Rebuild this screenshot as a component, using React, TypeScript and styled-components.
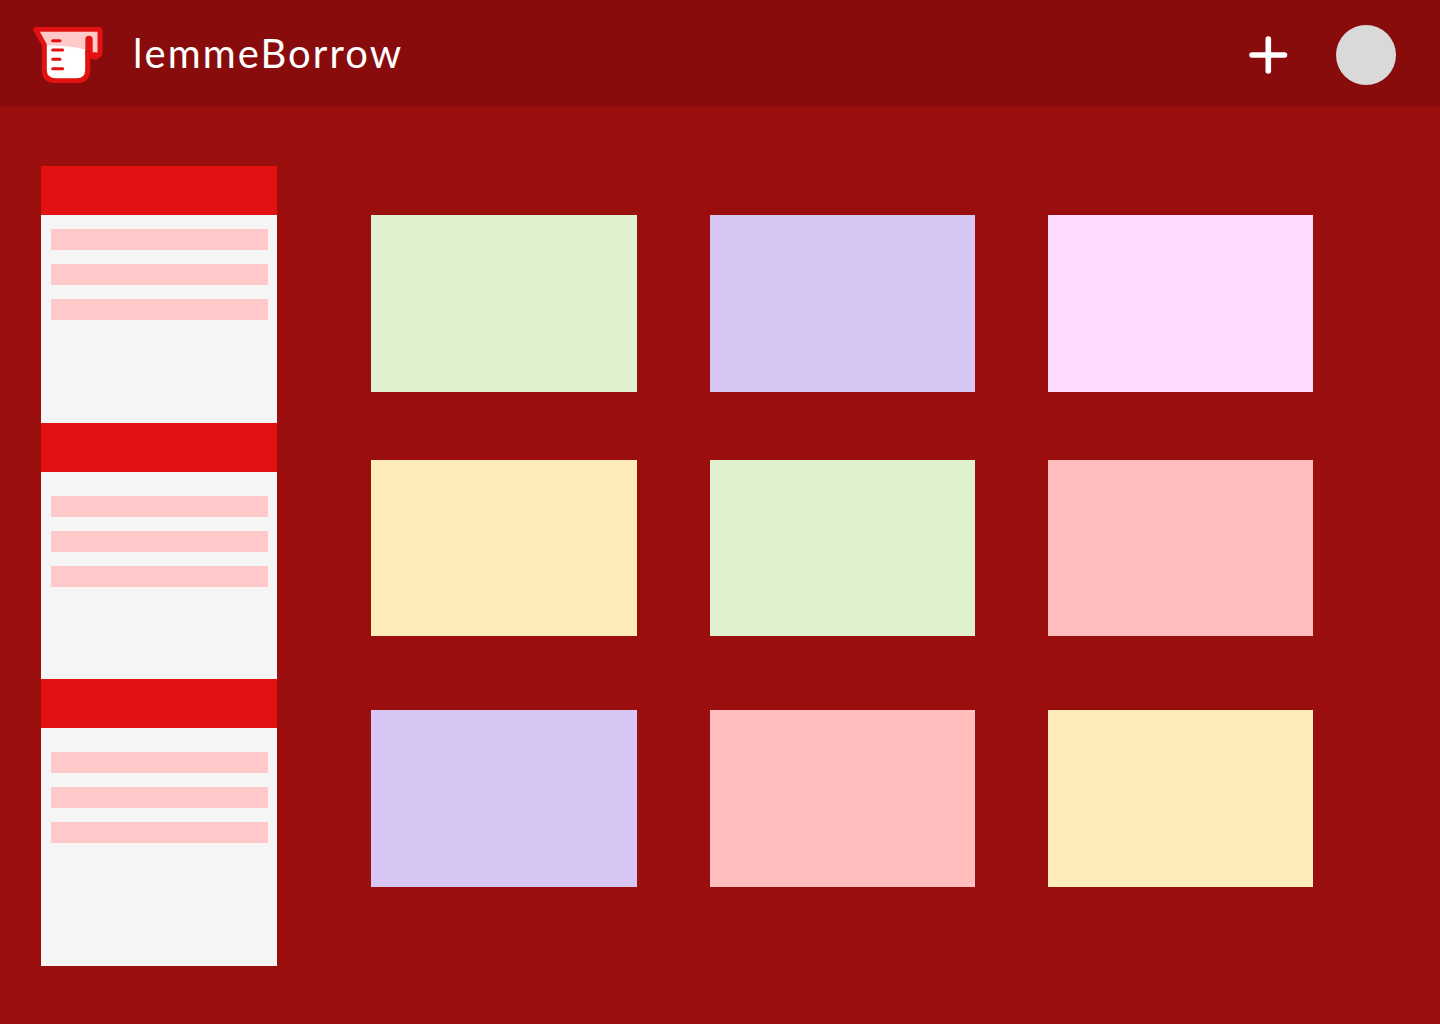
import styled, { createGlobalStyle } from "styled-components";

const GlobalStyle = createGlobalStyle`
    html, body {
        margin: 0;
        padding: 0;
        background: #9b0e0e;
    }
    * {
        box-sizing: border-box;
    }
`;

const Page = styled.div`
    width: 1440px;
    height: 1024px;
    overflow: hidden;
    background: #9b0e0e;
`;

const Header = styled.header`
    display: flex;
    align-items: center;
    height: 107px;
    padding: 3px 44px 0 33px;
    background: #880c0c;
`;

const Brand = styled.div`
    display: flex;
    align-items: center;
    gap: 30px;
`;

const Title = styled.h1`
    margin: -5px 0 0;
    color: #fff;
    font-family: "Lato", sans-serif;
    font-size: 40px;
    font-weight: 400;
    letter-spacing: 2.1px;
    line-height: 1;
`;

const Actions = styled.div`
    display: flex;
    align-items: center;
    gap: 48px;
    margin-left: auto;
`;

const Avatar = styled.div`
    width: 60px;
    height: 60px;
    border-radius: 50%;
    background: #d9d9d9;
`;

const Main = styled.main`
    display: flex;
    align-items: flex-start;
    padding: 59px 0 0 41px;
`;

const Sidebar = styled.aside`
    display: flex;
    flex-direction: column;
    width: 236px;
`;

const Section = styled.section<{ $height: number }>`
    height: ${(props) => props.$height}px;
    background: #f5f5f5;
`;

const SectionHead = styled.div`
    height: 49px;
    background: #e21212;
`;

const SectionRows = styled.div<{ $top: number }>`
    display: flex;
    flex-direction: column;
    gap: 14px;
    padding: ${(props) => props.$top}px 9px 0 10px;
`;

const Row = styled.div`
    height: 21px;
    background: #ffc9c9;
`;

const Grid = styled.div`
    display: grid;
    grid-template-columns: repeat(3, 265.4px);
    grid-template-rows: 244.6px 250.4px 176.6px;
    column-gap: 73px;
    margin: 49px 0 0 94.2px;
`;

const Card = styled.div<{ $color: string }>`
    height: 176.6px;
    background: ${(props) => props.$color};
`;

const green = "#dff1cf";
const purple = "#d7c5f3";
const pink = "#fddbff";
const yellow = "#ffecbb";
const salmon = "#ffbdbd";

const cards = [green, purple, pink, yellow, green, salmon, purple, salmon, yellow];

const sections = [
    { height: 257, top: 14 },
    { height: 256, top: 24 },
    { height: 287, top: 24 },
];

function Logo() {
    return (
        <svg width="70" height="56" viewBox="39 36 210 168" fill="none">
            <path
                d="M46 42H234Q241 42 241 50V112Q241 124 226 124Q206 124 206 112V165Q206 198 170 198H108Q72 198 72 165V90L46 42Z"
                fill="#ffc9c9"
            />
            <path d="M78 92Q140 90 198 104V165Q198 192 170 192H108Q78 192 78 165Z" fill="#fff" />
            <path
                d="M203 112V165Q203 197 170 197H108Q73 197 73 165V90L47 43H234Q240 43 240 50V112Q240 123 226 123"
                stroke="#e21212"
                strokeWidth="15"
                strokeLinejoin="round"
                strokeLinecap="round"
            />
            <path d="M207 73V112Q207 123 226 123" stroke="#e21212" strokeWidth="22" strokeLinecap="round" />
            <path
                d="M98 77H120M98 105H128M98 133H120M98 161H128"
                stroke="#e21212"
                strokeWidth="9"
                strokeLinecap="round"
            />
        </svg>
    );
}

function PlusIcon() {
    return (
        <svg width="40" height="40" viewBox="0 0 40 40" fill="none">
            <path d="M20.3 4V36M4 20H36.5" stroke="#fff" strokeWidth="5.6" strokeLinecap="round" />
        </svg>
    );
}

function App() {
    return (
        <Page>
            <GlobalStyle />
            <Header>
                <Brand>
                    <Logo />
                    <Title>lemmeBorrow</Title>
                </Brand>
                <Actions>
                    <PlusIcon />
                    <Avatar />
                </Actions>
            </Header>
            <Main>
                <Sidebar>
                    {sections.map((section, i) => (
                        <Section key={i} $height={section.height}>
                            <SectionHead />
                            <SectionRows $top={section.top}>
                                <Row />
                                <Row />
                                <Row />
                            </SectionRows>
                        </Section>
                    ))}
                </Sidebar>
                <Grid>
                    {cards.map((color, i) => (
                        <Card key={i} $color={color} />
                    ))}
                </Grid>
            </Main>
        </Page>
    );
}

export default App;
